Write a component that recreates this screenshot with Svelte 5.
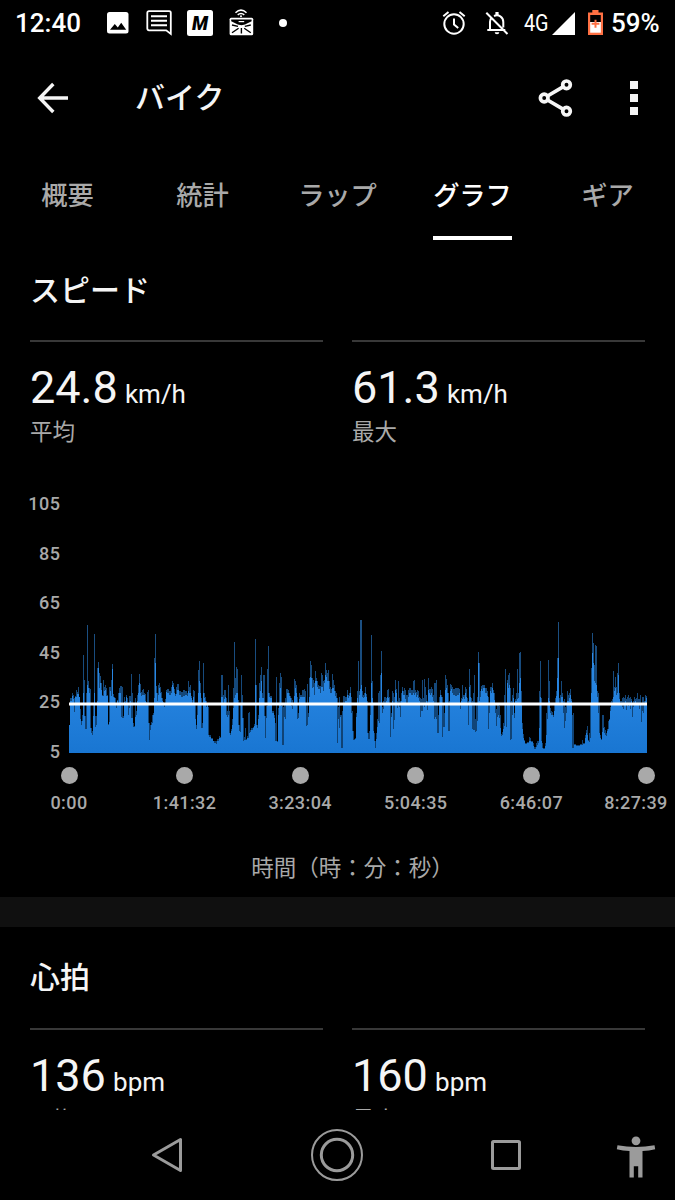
<script>
  const tabs = ['概要', '統計', 'ラップ', 'グラフ', 'ギア'];
  let activeTab = $state('グラフ');

  const speed = [
    { value: '24.8', unit: 'km/h', label: '平均' },
    { value: '61.3', unit: 'km/h', label: '最大' },
  ];
  const heartRate = [
    { value: '136', unit: 'bpm', label: '平均' },
    { value: '160', unit: 'bpm', label: '最大' },
  ];

  const yTicks = [105, 85, 65, 45, 25, 5];
  const xTicks = ['0:00', '1:41:32', '3:23:04', '5:04:35', '6:46:07', '8:27:39'];

  const chartWidth = 578;
  const chartHeight = 249;

  // x, low, high: every entry holds until the next x
  const samples = `
    0,28,28 1,52,55 3,57,60 4,54,58 5,41,55 6,56,57 7,56,63 8,59,61 9,59,66 10,56,56 11,34,44 12,28,32 13,32,38
    14,60,98 15,37,73 16,24,37 17,24,60 18,68,128 19,65,72 20,60,65 21,25,64 22,20,25 23,18,22 24,37,50 25,60,119
    26,26,37 27,28,37 28,52,85 29,85,91 30,65,80 31,70,77 32,63,70 33,57,58 34,57,73 35,62,66 36,63,68 37,57,65
    38,57,58 39,28,29 40,31,66 41,62,66 42,57,73 43,84,89 44,56,59 45,55,56 46,50,55 47,45,48 48,52,53 49,50,60
    50,60,65 51,60,67 52,36,67 53,35,66 54,35,37 55,51,56 56,50,52 57,56,58 58,50,55 59,38,50 60,45,57 61,52,57
    62,35,79 63,35,60 64,26,30 65,26,27 66,36,55 67,38,42 68,52,58 69,60,68 70,70,79 71,60,69 72,57,61 73,58,63
    74,58,64 75,58,60 76,52,59 77,48,51 78,50,61 79,30,63 80,13,30 81,23,28 82,28,31 83,30,38 84,38,40 85,55,95
    86,90,119 87,60,67 88,52,60 89,58,68 90,65,70 91,60,66 92,55,61 93,52,55 94,50,51 95,46,50 96,48,54 97,61,63
    98,60,64 100,58,62 102,60,66 103,68,72 104,66,70 105,60,64 106,57,59 107,59,66 108,63,69 110,58,62 112,56,61
    114,57,63 116,58,62 118,57,60 119,62,72 120,60,66 121,60,68 122,55,57 123,50,53 124,56,63 125,48,62 126,34,50
    127,24,28 128,38,50 129,60,83 130,72,92 131,60,70 132,25,55 133,25,30 134,60,90 135,55,60 136,52,56 137,46,52
    138,48,50 139,18,46 140,16,18 142,14,15 144,12,12 145,10,12 147,9,12 148,12,14 150,15,17 151,15,16 152,56,78
    154,50,58 155,54,63 156,56,63 157,38,55 158,36,42 159,38,68 160,20,42 161,18,20 162,22,24 163,28,34 164,45,65
    165,55,111 166,58,75 167,60,86 168,60,84 169,28,53 170,22,28 171,21,50 172,48,78 173,35,58 174,12,35 175,13,16
    176,13,25 177,13,14 178,15,17 179,15,40 180,20,41 181,21,23 182,23,25 184,25,26 185,27,29 186,68,114 187,28,68
    188,25,28 189,34,38 190,55,70 191,62,78 192,72,86 193,55,60 194,55,78 195,37,78 196,15,37 197,35,47 198,47,84
    199,60,107 200,56,60 201,55,57 203,40,42 205,35,38 206,12,30 207,12,76 208,11,12 209,38,45 210,50,70 211,65,80
    212,47,76 213,8,48 214,8,46 215,36,48 216,34,55 217,50,64 218,60,64 219,60,63 220,57,60 221,55,57 222,47,55
    223,44,53 224,48,50 225,57,74 226,65,72 227,60,68 228,34,56 229,35,40 230,54,60 231,56,58 233,56,63 235,56,64
    236,48,62 237,27,48 238,28,69 239,36,40 240,56,75 241,76,92 242,75,88 243,65,75 244,66,73 245,58,70 246,72,82
    247,72,75 248,66,72 249,64,68 250,64,67 251,60,67 252,66,80 253,66,78 254,62,72 255,70,73 256,78,90 257,76,83
    258,72,80 259,72,83 260,64,72 261,60,66 262,60,64 263,65,79 264,65,73 265,62,68 266,57,62 267,55,60 268,10,55
    269,34,46 270,25,56 271,36,38 272,5,38 273,5,42 274,50,57 276,52,56 278,58,63 279,55,58 280,57,60 281,60,66
    282,40,56 283,22,42 284,13,22 285,13,14 286,14,15 287,36,40 288,55,62 289,50,92 290,58,62 291,64,133 292,68,133
    293,56,62 294,55,58 295,56,60 296,60,66 297,56,59 298,20,52 299,14,20 300,14,22 301,38,48 302,70,118 303,55,72
    304,22,50 305,12,20 306,5,12 307,14,20 308,26,34 309,32,60 310,30,62 311,50,78 312,80,102 313,40,46 314,44,52
    315,50,56 317,52,55 318,56,63 319,55,64 320,50,56 321,16,48 322,36,40 323,52,62 324,24,60 325,33,56 326,63,73
    327,60,64 328,45,52 329,50,72 330,46,55 331,36,52 332,52,60 333,62,66 334,58,62 335,58,65 336,54,63 337,50,58
    338,48,58 339,56,63 340,60,65 342,58,63 344,60,72 345,58,73 346,60,63 347,56,61 348,58,63 349,55,62 350,52,56
    351,36,55 352,42,54 353,42,73 354,50,55 355,46,74 356,48,66 357,52,58 358,43,52 359,63,75 360,60,64 361,58,64
    362,60,66 363,56,64 364,52,58 365,34,70 366,36,70 367,34,73 368,20,50 369,20,38 370,50,56 371,58,63 372,56,58
    373,16,56 374,26,50 375,26,40 376,63,78 377,65,74 378,60,68 379,22,60 380,22,52 381,62,69 382,64,68 383,60,66
    384,58,64 386,57,65 388,58,65 390,60,64 391,44,50 392,52,55 393,54,68 394,56,58 395,54,58 396,60,66 397,56,64
    398,50,55 399,28,52 400,66,84 401,56,68 402,50,55 403,24,52 404,23,60 405,23,78 406,21,34 407,22,50 408,32,56
    409,90,101 410,52,90 411,56,62 412,64,67 413,62,68 414,65,68 416,60,65 418,57,62 419,24,56 420,40,48 421,62,66
    422,60,66 423,65,70 424,60,63 425,53,60 426,40,50 427,27,44 428,36,50 429,38,50 430,35,47 431,25,38 432,17,19
    433,18,21 434,24,30 435,27,58 436,48,84 437,26,50 438,70,73 439,65,78 440,68,80 441,13,65 442,14,52 443,38,58
    444,55,65 445,35,40 446,52,54 447,52,60 448,54,84 449,55,60 450,70,100 451,75,101 452,50,62 453,24,30 454,15,19
    455,12,13 456,9,10 458,10,11 460,12,16 461,12,15 462,11,12 464,7,10 465,4,6 467,6,10 468,8,12 469,10,12
    470,25,62 471,56,92 472,12,55 473,5,10 474,4,5 476,7,10 477,18,40 478,34,50 479,55,93 480,52,72 481,40,45
    482,38,42 483,38,41 484,36,38 485,42,48 486,50,55 487,57,62 488,75,95 489,95,131 490,48,55 491,50,58 492,56,72
    493,56,60 494,40,52 495,25,54 496,32,46 497,40,48 498,52,62 499,52,58 500,55,60 501,58,64 502,52,54 503,5,38
    504,5,40 505,8,9 507,7,8 511,8,9 513,8,13 514,9,10 516,15,18 517,20,23 518,18,27 519,12,13 520,11,20 521,15,50
    522,60,85 523,100,120 524,90,110 525,72,88 526,70,108 527,68,107 528,56,62 529,40,60 530,20,50 531,15,18
    532,13,14 533,21,38 534,25,38 535,20,26 536,18,23 537,17,20 538,22,24 539,24,32 540,33,34 541,42,46 542,50,52
    543,48,54 544,56,82 545,62,66 546,65,76 547,58,66 548,60,80 549,78,90 550,54,60 551,50,52 553,46,55 554,44,56
    555,50,55 556,52,58 557,43,54 558,50,56 559,47,58 560,50,55 561,44,56 562,52,54 563,36,50 564,46,52 565,50,56
    566,52,54 567,50,55 568,48,60 569,50,54 570,44,54 571,50,58 572,31,50 573,42,56 574,40,56 575,50,52 576,52,58
    577,55,57
  `.trim().split(/\s+/).map((sample) => sample.split(',').map(Number));

  function stepPath(column) {
    const steps = samples.map((sample, i) => {
      const end = samples[i + 1]?.[0] ?? chartWidth;
      return `V${chartHeight - sample[column]}H${end}`;
    });
    return `M0 ${chartHeight}${steps.join('')}V${chartHeight}Z`;
  }
</script>

{#snippet stats(items)}
  <div class="stats">
    {#each items as item}
      <div class="stat">
        <div class="stat-value">{item.value} <span>{item.unit}</span></div>
        <div class="stat-label">{item.label}</div>
      </div>
    {/each}
  </div>
{/snippet}

<div class="screen">
  <div class="status-bar">
    <span class="clock">12:40</span>
    <svg class="picture" width="22" height="22" viewBox="0 0 22 22">
      <rect width="21.5" height="21.5" rx="2.5" fill="#fff" />
      <path d="M3 17.8 7.8 12l3 3.6 3.4-4.8 5 7z" fill="#000" />
    </svg>
    <svg class="chat" width="26" height="26" viewBox="0 0 26 26" fill="none" stroke="#fff">
      <path d="M3 1.2h20.2c1 0 1.600.6 1.600 1.600v21.100l-4.600-3.600H3c-1 0-1.700-.7-1.700-1.700V2.900C1.300 1.900 2 1.200 3 1.200z" stroke-width="1.8" />
      <path d="M5 6.200h16M5 10.700h16M5 15.200h16" stroke-width="1.9" />
    </svg>
    <svg class="letter" width="26" height="26" viewBox="0 0 26 26">
      <rect width="26" height="26" rx="2.5" fill="#fff" />
      <text x="13" y="20" text-anchor="middle" textLength="16" lengthAdjust="spacingAndGlyphs">M</text>
    </svg>
    <svg class="radio" width="25" height="27" viewBox="0 0 25 27" fill="none" stroke="#fff">
      <path d="M6.500 3.800Q12 -1.500 17.500 3.800M8.700 5.900q3.300-2.800 6.600 0" stroke-width="1.5" />
      <circle cx="12" cy="7.300" r="1" fill="#fff" stroke="none" />
      <rect x="0.600" y="8.800" width="23.600" height="17.400" rx="1.500" fill="#fff" stroke="none" />
      <path d="M2.200 10.600h20.400v1.600l-6.600 3.200-3.600.9-3.600-.9-6.600-3.200z" fill="#000" stroke="none" />
      <path d="M9.600 12.600h5.600" stroke-width="1.2" />
      <path d="M12.400 19v5.500M3 16l6 1.400M21.800 16l-6 1.400M3 23.800l6.600-4.600M21.800 23.800l-6.600-4.600" stroke="#000" stroke-width="1.4" />
    </svg>
    <span class="dot"></span>

    <svg class="alarm" width="24" height="24" viewBox="0 0 24 24" fill="none" stroke="#fff" stroke-width="2">
      <circle cx="12" cy="13" r="9.7" />
      <path d="M12 7.500v6l4.200 3.500M1.300 5.200 6.500 1M22.700 5.200 17.500 1" />
    </svg>
    <svg class="bell" width="24" height="24" viewBox="0 0 24 24" fill="none" stroke="#fff" stroke-width="2">
      <path d="M2.300 19h18M5 19V11c0-2 .7-3.400 1.700-4.500M9 5c4.500-2 9.300.8 9.300 6v5.500M1.300 1.800 22.500 23" />
      <path d="M12 1v3" stroke-width="3.2" />
      <path d="M9.700 21.300h4.600a2.300 2 0 0 1-4.600 0z" fill="#fff" stroke="none" />
    </svg>
    <span class="network">4G</span>
    <svg class="signal" width="23" height="23" viewBox="0 0 23 23">
      <path d="M23 0v23H0z" fill="#fff" />
    </svg>
    <svg class="battery" width="15" height="25" viewBox="0 0 15 25">
      <path d="M4.300 0h6.200v2.500H15V25H0V2.500h4.300z" fill="#ff7043" />
      <path d="M2.200 5h10.600v7H2.200z" fill="#000" />
      <path d="M2.200 12h10.600v10.700H2.200z" fill="#fff" />
      <path d="M7.500 9.800v8M3.600 13.800h7.800" stroke="#ff7043" stroke-width="2" />
    </svg>
    <span class="percent">59%</span>
  </div>

  <header class="app-bar">
    <svg class="back" width="32" height="32" viewBox="0 0 32 32" fill="none" stroke="#f5f5f5" stroke-width="3.4">
      <path d="M31 16H3.500M16.300 2 2.700 16l13.600 14" />
    </svg>
    <h1>バイク</h1>
    <svg class="share" width="36" height="38" viewBox="0 0 36 38" fill="none" stroke="#f5f5f5" stroke-width="3.7">
      <path d="M9.500 17 25 7.800M9.500 21 25 30.200" />
      <circle cx="6.200" cy="19" r="3.800" />
      <circle cx="28.500" cy="5.800" r="3.800" />
      <circle cx="28.500" cy="32.200" r="3.800" />
    </svg>
    <div class="more"><i></i><i></i><i></i></div>
  </header>

  <nav class="tabs">
    {#each tabs as tab}
      <button class:active={tab === activeTab} onclick={() => (activeTab = tab)}><span>{tab}</span></button>
    {/each}
  </nav>

  <main>
    <section class="speed">
      <h2>スピード</h2>
      {@render stats(speed)}

      <div class="chart">
        <div class="y-axis">
          {#each yTicks as tick}
            <span>{tick}</span>
          {/each}
        </div>
        <svg class="plot" width={chartWidth} height={chartHeight} viewBox="0 0 {chartWidth} {chartHeight}">
          <defs>
            <linearGradient id="fill" gradientUnits="userSpaceOnUse" x1="0" y1="110" x2="0" y2={chartHeight}>
              <stop offset="0" stop-color="#3593ef" />
              <stop offset="1" stop-color="#1976d2" />
            </linearGradient>
          </defs>
          <g shape-rendering="crispEdges">
            <path d={stepPath(2)} fill="url(#fill)" opacity="0.55" />
            <path d={stepPath(1)} fill="url(#fill)" />
          </g>
          <rect y="198.5" width={chartWidth} height="3" fill="#fff" />
        </svg>
      </div>
      <div class="x-axis">
        {#each xTicks as tick}
          <div class="x-tick"><i></i><span>{tick}</span></div>
        {/each}
      </div>
      <div class="x-title">時間（時：分：秒）</div>
    </section>

    <section class="heart-rate">
      <h2>心拍</h2>
      {@render stats(heartRate)}
    </section>
  </main>

  <footer class="nav-bar">
    <svg class="nav-back" width="32" height="36" viewBox="0 0 32 36" fill="none" stroke="#9b9b9b" stroke-width="3">
      <path d="M29.500 2.500v31L2.500 18z" stroke-linejoin="round" />
    </svg>
    <svg class="nav-home" width="54" height="54" viewBox="0 0 54 54" fill="none" stroke="#9b9b9b">
      <circle cx="27" cy="27" r="25" stroke-width="2" />
      <circle cx="27" cy="27" r="15.700" stroke-width="3" />
    </svg>
    <svg class="nav-recent" width="32" height="32" viewBox="0 0 32 32" fill="none" stroke="#9b9b9b" stroke-width="3">
      <rect x="2.500" y="2.500" width="27" height="27" rx="1" />
    </svg>
    <svg class="nav-person" width="40" height="42" viewBox="0 0 40 42" fill="#9b9b9b">
      <circle cx="20" cy="4.800" r="4.400" />
      <path d="M1.500 9.200q18.500 3.600 37 0l.7 4q-6 1.400-12.700 1.900V41.500h-4.300V30.300h-4.400v11.200h-4.300V15.100Q6.800 14.600.8 13.200z" />
    </svg>
  </footer>
</div>

<style>
  :global(body) {
    background: #000;
    overflow: hidden;
  }

  .screen {
    display: flex;
    flex-direction: column;
    width: 675px;
    height: 1200px;
    overflow: hidden;
    background: #000;
    color: #f5f5f5;
    font-family: Roboto, 'Noto Sans CJK JP', sans-serif;
  }

  svg {
    display: block;
    flex: none;
  }

  .status-bar {
    display: flex;
    align-items: center;
    height: 46px;
    padding: 0 15px;
    color: #fff;
    font-size: 26px;
    font-weight: 500;

    & .clock {
      width: 92px;
    }

    & .chat {
      margin-left: 17px;
    }

    & .letter {
      margin-left: 15px;
      font: italic 900 20px Roboto, sans-serif;
    }

    & .radio {
      margin-left: 16px;
      margin-top: -2px;
    }

    & .dot {
      width: 8px;
      height: 8px;
      margin-left: 24.5px;
      border-radius: 50%;
      background: #fff;
    }

    & .alarm {
      margin-left: auto;
    }

    & .bell {
      margin-left: 19px;
    }

    & .network {
      margin-left: 15px;
      font-size: 23px;
      font-weight: 400;
      transform: scaleX(0.86);
      transform-origin: left;
      width: 28px;
    }

    & .battery {
      margin-left: 13px;
      margin-top: -2px;
    }

    & .percent {
      margin-left: 8px;
      width: 49px;
    }
  }

  .app-bar {
    display: flex;
    align-items: center;
    height: 103px;
    padding: 0 37px;

    & h1 {
      margin: 0 auto 0 66px;
      font-size: 30px;
      font-weight: 500;
      line-height: 40px;
    }

    & .more {
      display: flex;
      flex-direction: column;
      gap: 5px;
      margin-left: 56px;

      & > i {
        width: 8px;
        height: 8px;
        background: #f5f5f5;
      }
    }
  }

  .tabs {
    display: flex;
    height: 91px;

    & > button {
      display: flex;
      flex: 1;
      justify-content: center;
      padding: 0;
      border: 0;
      background: none;
      color: #a9a9a9;
      font: 500 26.25px/94px Roboto, 'Noto Sans CJK JP', sans-serif;
    }

    & > button.active {
      color: #fff;

      & > span {
        border-bottom: 4px solid #fff;
        height: 87px;
      }
    }
  }

  main {
    flex: 1;
    overflow: hidden;
  }

  h2 {
    margin: 0;
    padding: 31px 30px 0;
    font-size: 30px;
    font-weight: 500;
    line-height: 40px;
  }

  .stats {
    display: flex;
    gap: 29px;
    padding: 30px 30px 0;
  }

  .stat {
    flex: 1;
    border-top: 2px solid #383838;
  }

  .stat-value {
    padding-top: 19px;
    font-size: 45px;
    line-height: 54px;
    white-space: nowrap;

    & > span {
      margin-left: -4px;
      font-size: 26px;
    }
  }

  .stat-label {
    margin-top: -4px;
    color: #a9a9a9;
    font-size: 22.5px;
    line-height: 30px;
  }

  .speed {
    height: 657px;
    border-bottom: 30px solid #101010;

    & .stats {
      padding-top: 29px;
    }
  }

  .chart {
    display: flex;
    margin-top: 47px;
    color: #a9a9a9;
    font-size: 18px;
    font-weight: 500;
    letter-spacing: 0.5px;
  }

  .y-axis {
    display: flex;
    flex-direction: column;
    justify-content: space-between;
    width: 60.5px;
    height: 268px;
    margin-right: 8.5px;
    text-align: right;
    line-height: 20px;
  }

  .plot {
    margin-top: 10px;
  }

  .x-axis {
    display: flex;
    justify-content: space-between;
    margin: 5px -12px 0 19px;
    width: 678px;
    color: #a9a9a9;
    font-size: 18px;
    font-weight: 500;
    letter-spacing: 0.4px;
  }

  .x-tick {
    display: flex;
    flex-direction: column;
    align-items: center;
    width: 100px;

    & > i {
      width: 17px;
      height: 17px;
      border-radius: 50%;
      background: #a9a9a9;
    }

    & > span {
      padding-top: 9px;
      line-height: 20px;
    }

    /* keeps the last label inside the screen */
    &:last-child > span {
      margin-right: 22px;
    }
  }

  .x-title {
    margin-top: 40px;
    padding-left: 30px;
    color: #a9a9a9;
    font-size: 22.5px;
    line-height: 30px;
    text-align: center;
  }

  .nav-bar {
    display: flex;
    align-items: center;
    height: 90px;
    padding-left: 151px;

    & .nav-home {
      margin-left: 127px;
    }

    & .nav-recent {
      margin-left: 126px;
    }

    & .nav-person {
      margin-left: 94px;
      margin-top: 3px;
    }
  }
</style>
